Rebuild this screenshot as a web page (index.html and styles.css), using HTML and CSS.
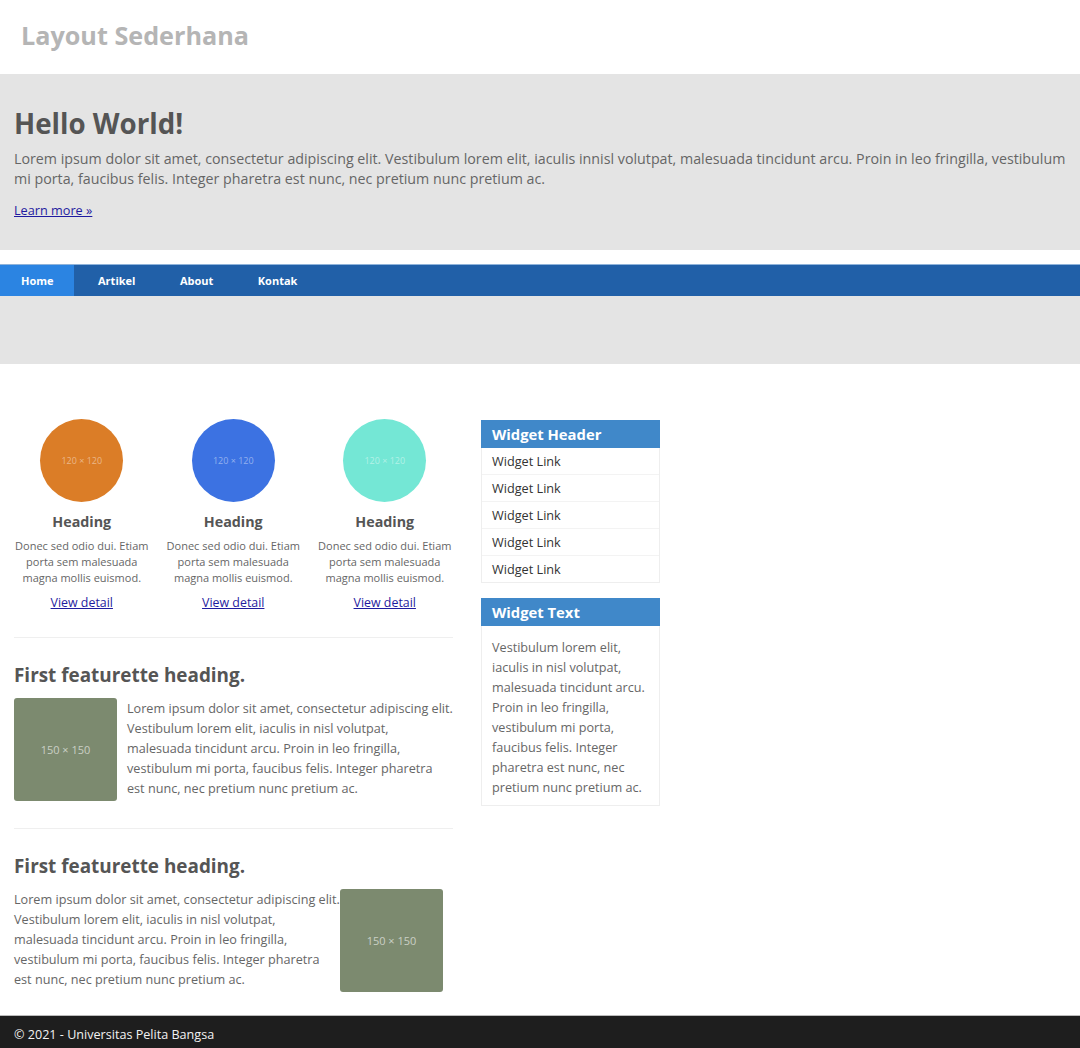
FILE: index.html
```html
<!DOCTYPE html>
<html lang="id">
<head>
<meta charset="utf-8">
<title>Layout Sederhana</title>
<link rel="stylesheet" href="styles.css">
</head>
<body>
<header class="site-header">
  <div class="site-title">Layout Sederhana</div>
</header>
<section class="hero">
  <h1>Hello World!</h1>
  <p>Lorem ipsum dolor sit amet, consectetur adipiscing elit. Vestibulum lorem elit, iaculis innisl volutpat, malesuada tincidunt arcu. Proin in leo fringilla, vestibulum mi porta, faucibus felis. Integer pharetra est nunc, nec pretium nunc pretium ac.</p>
  <a class="hero-link" href="#">Learn more »</a>
</section>
<nav class="nav">
  <a class="nav-item active" href="#">Home</a>
  <a class="nav-item" href="#">Artikel</a>
  <a class="nav-item" href="#">About</a>
  <a class="nav-item" href="#">Kontak</a>
</nav>
<div class="band"></div>
<main class="content">
  <div class="main-col">
    <div class="cards">
      <div class="card">
        <div class="circle c1">120 × 120</div>
        <h2>Heading</h2>
        <p>Donec sed odio dui. Etiam porta sem malesuada magna mollis euismod.</p>
        <a href="#">View detail</a>
      </div>
      <div class="card">
        <div class="circle c2">120 × 120</div>
        <h2>Heading</h2>
        <p>Donec sed odio dui. Etiam porta sem malesuada magna mollis euismod.</p>
        <a href="#">View detail</a>
      </div>
      <div class="card">
        <div class="circle c3">120 × 120</div>
        <h2>Heading</h2>
        <p>Donec sed odio dui. Etiam porta sem malesuada magna mollis euismod.</p>
        <a href="#">View detail</a>
      </div>
    </div>
    <hr class="divider">
    <article class="feature">
      <h3>First featurette heading.</h3>
      <div class="feature-body">
        <div class="thumb">150 × 150</div>
        <p>Lorem ipsum dolor sit amet, consectetur adipiscing elit. Vestibulum lorem elit, iaculis in nisl volutpat, malesuada tincidunt arcu. Proin in leo fringilla, vestibulum mi porta, faucibus felis. Integer pharetra est nunc, nec pretium nunc pretium ac.</p>
      </div>
    </article>
    <hr class="divider">
    <article class="feature">
      <h3>First featurette heading.</h3>
      <div class="feature-body reverse">
        <p>Lorem ipsum dolor sit amet, consectetur adipiscing elit. Vestibulum lorem elit, iaculis in nisl volutpat, malesuada tincidunt arcu. Proin in leo fringilla, vestibulum mi porta, faucibus felis. Integer pharetra est nunc, nec pretium nunc pretium ac.</p>
        <div class="thumb">150 × 150</div>
      </div>
    </article>
  </div>
  <aside class="sidebar">
    <div class="widget">
      <div class="widget-head">Widget Header</div>
      <ul class="widget-list">
        <li>Widget Link</li>
        <li>Widget Link</li>
        <li>Widget Link</li>
        <li>Widget Link</li>
        <li>Widget Link</li>
      </ul>
    </div>
    <div class="widget">
      <div class="widget-head">Widget Text</div>
      <p class="widget-text">Vestibulum lorem elit, iaculis in nisl volutpat, malesuada tincidunt arcu. Proin in leo fringilla, vestibulum mi porta, faucibus felis. Integer pharetra est nunc, nec pretium nunc pretium ac.</p>
    </div>
  </aside>
</main>
<footer class="footer">© 2021 - Universitas Pelita Bangsa</footer>
</body>
</html>
```
FILE: styles.css
```css
* { box-sizing: border-box; }
html, body { margin: 0; padding: 0; }
body {
  font-family: "Open Sans", "Liberation Sans", sans-serif;
  color: #555;
  background: #fff;
}
.site-header {
  height: 74px;
  display: flex;
  align-items: center;
  padding-left: 21px;
  padding-bottom: 5px;
}
.site-title {
  font-size: 25.2px;
  font-weight: 700;
  color: #b5b5b5;
}
.hero {
  background: #e4e4e4;
  height: 176px;
  padding: 24px 14px 0 14px;
}
.hero h1 {
  margin: 0;
  font-size: 27.7px;
  line-height: 51px;
  font-weight: 700;
  color: #555;
}
.hero p {
  margin: 0 0 9px 0;
  font-size: 14.25px;
  line-height: 20px;
  color: #666;
}
.hero-link {
  font-size: 12.7px;
  line-height: 22px;
  color: #1f1ba0;
}
.nav {
  margin-top: 14px;
  background: #2160a8;
  border-top: 1px solid #8fb3da;
  height: 32px;
  display: flex;
}
.nav-item {
  color: #fff;
  text-decoration: none;
  font-family: "Open Sans", sans-serif;
  font-size: 11px;
  font-weight: 700;
  line-height: 31px;
  padding: 0 20px 0 21px;
  margin-right: 3.5px;
}
.nav-item.active { background: #2b84e2; }
.band {
  background: #e4e4e4;
  height: 68px;
}
.content {
  display: flex;
  padding: 55px 14px 20px 14px;
  gap: 28px;
}
.main-col { width: 439px; }
.cards {
  display: grid;
  grid-template-columns: repeat(3, 151.5px);
  margin-left: -8px;
}
.card {
  text-align: center;
  padding: 0 2px;
}
.circle {
  width: 83px;
  height: 83px;
  border-radius: 50%;
  margin: 0 auto;
  display: flex;
  align-items: center;
  justify-content: center;
  font-size: 9px;
  color: rgba(255,255,255,0.45);
}
.c1 { background: #db7d27; }
.c2 { background: #3c72e2; }
.c3 { background: #74e7d5; }
.card h2 {
  margin: 10px 0 6px;
  font-size: 14.3px;
  line-height: 20px;
  font-weight: 700;
  color: #555;
}
.card p {
  margin: 0 0 4px;
  font-size: 11px;
  line-height: 16px;
  color: #666;
}
.card a {
  font-size: 12.4px;
  line-height: 20px;
  color: #1f1ba0;
}
.divider {
  border: 0;
  border-top: 1px solid #efefef;
  margin: 24px 0 22px;
}
.feature h3 {
  margin: 0 0 8px;
  font-size: 18.9px;
  line-height: 30px;
  font-weight: 700;
  color: #555;
}
.feature-body {
  display: flex;
  gap: 10px;
  align-items: flex-start;
  padding-bottom: 3px;
}
.feature-body p {
  margin: 0;
  font-size: 12.65px;
  line-height: 20px;
  color: #666;
  flex: 1;
}
.feature-body.reverse { gap: 0; }
.feature-body.reverse .thumb { margin-right: 10px; }
.thumb {
  width: 103px;
  height: 103px;
  flex: none;
  background: #7c8a6f;
  border-radius: 3px;
  display: flex;
  align-items: center;
  justify-content: center;
  font-size: 11px;
  color: rgba(255,255,255,0.6);
}
.sidebar {
  width: 179px;
  padding-top: 1px;
}
.widget {
  border: 1px solid #eee;
  margin-bottom: 15px;
}
.widget-head {
  background: #4088c9;
  color: #fff;
  font-size: 14.8px;
  font-weight: 700;
  line-height: 28px;
  padding: 0 11px;
  margin: -1px -1px 0 -1px;
}
.widget-list {
  list-style: none;
  margin: 0;
  padding: 0;
}
.widget-list li {
  font-size: 12.7px;
  line-height: 26px;
  color: #333;
  padding: 0 10px;
  border-top: 1px solid #f3f3f3;
}
.widget-list li:first-child { border-top: 0; }
.widget-text {
  margin: 0;
  padding: 11px 10px 8px;
  font-size: 12.65px;
  line-height: 20px;
  color: #666;
}
.footer {
  background: #1e1e1e;
  border-top: 1px solid #bbb;
  color: #f2f2f2;
  font-size: 12.6px;
  line-height: 30px;
  padding: 4px 14px 0;
}
```
